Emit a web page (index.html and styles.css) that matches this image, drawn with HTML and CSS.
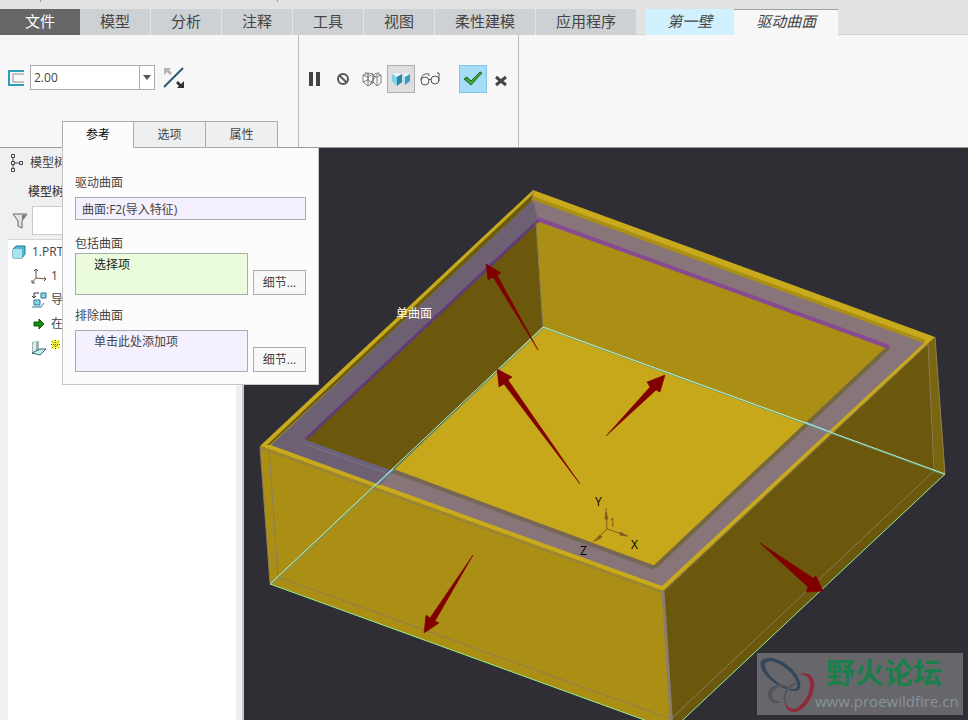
FILE: index.html
```html
<!DOCTYPE html>
<html lang="zh-CN">
<head>
  <meta charset="UTF-8">
  <title>驱动曲面</title>
  <meta name="viewport" content="width=device-width, initial-scale=1">
  <link rel="stylesheet" href="styles.css">
</head>
<body>

  <header>
    <div class="title-strip"></div>
    <nav class="tabs">
      <a href="#" class="tab tab-file">文件</a>
      <a href="#" class="tab">模型</a>
      <a href="#" class="tab">分析</a>
      <a href="#" class="tab">注释</a>
      <a href="#" class="tab">工具</a>
      <a href="#" class="tab">视图</a>
      <a href="#" class="tab">柔性建模</a>
      <a href="#" class="tab">应用程序</a>
      <a href="#" class="tab tab-context">第一壁</a>
      <a href="#" class="tab tab-current">驱动曲面</a>
    </nav>

    <div class="ribbon">
      <div class="group group-settings">
        <div class="thickness">
          <svg class="icon-thickness" width="18" height="18" viewBox="0 0 18 18" fill="none">
            <path d="M16 2H1v14h15" stroke="#2f9fb8" stroke-width="2"/>
            <path d="M16 5H5v8h11" stroke="#8b8f92"/>
          </svg>
          <div class="combo">
            <select aria-label="厚度">
              <option>2.00</option>
            </select>
            <span class="combo-arrow"><svg width="8" height="5" viewBox="0 0 8 5"><path d="M0 0h8L4 5z" fill="#555"/></svg></span>
          </div>
          <button class="flip" aria-label="反向">
            <svg width="22" height="22" viewBox="0 0 22 22">
              <path d="M1 20L20 1" stroke="#2b5873" stroke-width="2"/>
              <path d="M1 1h7L6 3l3 3-2 2-3-3-3 3z" fill="#b4b4b4"/>
              <path d="M21 21h-7l2-2-3-3 2-2 3 3 3-3z" fill="#333"/>
            </svg>
          </button>
        </div>

        <div class="subtabs">
          <button class="subtab active">参考</button>
          <button class="subtab">选项</button>
          <button class="subtab">属性</button>

          <div class="panel">
            <div class="field">
              <label for="driving">驱动曲面</label>
              <input id="driving" type="text" value="曲面:F2(导入特征)" readonly>
            </div>
            <div class="field field-include">
              <label for="include">包括曲面</label>
              <div class="collector">
                <textarea id="include" class="collecting" readonly>选择项</textarea>
                <button>细节...</button>
              </div>
            </div>
            <div class="field">
              <label for="exclude">排除曲面</label>
              <div class="collector">
                <textarea id="exclude" readonly>单击此处添加项</textarea>
                <button>细节...</button>
              </div>
            </div>
          </div>
        </div>
      </div>

      <div class="group group-actions">
        <button aria-label="暂停">
          <svg width="14" height="14" viewBox="0 0 14 14"><path d="M2 0h4v14H2zM9 0h4v14H9z" fill="#444"/></svg>
        </button>
        <button aria-label="无预览">
          <svg width="14" height="14" viewBox="0 0 14 14" fill="none" stroke="#555" stroke-width="2"><circle cx="7" cy="7" r="5"/><path d="M3 3l8 8"/></svg>
        </button>
        <button aria-label="分离预览">
          <svg width="20" height="18" viewBox="0 0 20 18" fill="none" stroke="#666" stroke-width=".8">
            <path d="M1 5l5 2v9M6 7l5-3M1 5l5-2 5 1v9l-5 3-5-4z"/>
            <path d="M1 12l5-2 5 3M6 3v7"/>
            <path d="M11 6l4 1v9l-4-4zM15 7l4-2v8l-4 3M8 14L17 2M11 6l3-3 5 2M3 2l4 3"/>
          </svg>
        </button>
        <button class="pressed" aria-label="连接预览">
          <svg width="20" height="16" viewBox="0 0 20 16">
            <path d="M1 3l5-1 4 1-4 3z" fill="#e8f8fc"/><path d="M1 3l5 3v9l-5-5z" fill="#7fd0ea"/><path d="M6 6l5-3v8l-5 4z" fill="#2787a8"/>
            <path d="M11 3l4-1 4 1-4 3z" fill="#e8f8fc"/><path d="M12 3l2 3v8l-2-3z" fill="#a9e0f2"/><path d="M14 6l5-3v7l-5 4z" fill="#3b9cbe"/>
          </svg>
        </button>
        <button aria-label="校验">
          <svg width="20" height="14" viewBox="0 0 20 14" fill="none" stroke="#555">
            <circle cx="5" cy="9" r="4"/><circle cx="15" cy="8" r="4"/><path d="M9 8q1-2 2 0M1 8C1 4 4 1 9 2v2M19 9V1h-2"/>
          </svg>
        </button>
        <button class="accept" aria-label="确定">
          <svg width="20" height="16" viewBox="0 0 20 16"><path d="M1 8l3-2 4 4L17 1l2 1L8 14z" fill="#3fa535" stroke="#1f6a26"/></svg>
        </button>
        <button aria-label="取消">
          <svg class="icon-cancel" width="14" height="12" viewBox="0 0 14 12"><path d="M1 2l10 8M11 2L1 10" stroke="#444" stroke-width="3"/></svg>
        </button>
      </div>
    </div>
  </header>

  <main>
    <aside>
      <div class="tree-title">
        <svg width="14" height="20" viewBox="0 0 14 20" fill="none" stroke="#444">
          <path d="M1.500 1.500h3v3h-3zM1.500 8.500h3v3h-3zM1.500 15.500h3v3h-3zM9.500 8.500h3v3h-3zM3 5v3M3 12v3M5 10h4"/>
        </svg>
        <span>模型树</span>
      </div>
      <h2>模型树</h2>
      <div class="filter">
        <svg width="16" height="16" viewBox="0 0 16 16"><path d="M1 1h14L10 8v7l-4-2V8z" fill="#e4e4e4" stroke="#666"/><path d="M10 2h4l-4 5z" fill="#777"/></svg>
        <input type="text" aria-label="过滤">
      </div>
      <ul class="tree">
        <li class="root">
          <svg width="14" height="14" viewBox="0 0 14 14" stroke="#28788f"><path d="M1 4l3-3h9v8l-3 4H1z" fill="#55b8d2"/><path d="M1 4h9v9H1z" fill="#a5e4f0" stroke="none"/></svg>
          <span>1.PRT</span>
        </li>
        <li>
          <svg width="16" height="16" viewBox="0 0 16 16" fill="none" stroke="#6b5340"><path d="M5 1v9l10 1M5 10l-4 5M3 3l2-2 2 2M13 9l2 2-2 2M1 12v3h3"/></svg>
          <span>1</span>
        </li>
        <li>
          <svg width="16" height="16" viewBox="0 0 16 16" stroke="#28788f"><path d="M10 1h5v5h-5zM3 8h6v5H3z" fill="#8ad6e8"/><path d="M1 15h9l3-4" fill="none"/><path d="M8 1H3v4M1 4l2 2 2-2" fill="none" stroke="#333"/></svg>
          <span>导</span>
        </li>
        <li>
          <svg width="16" height="16" viewBox="0 0 16 16"><path d="M3 6h5V3l5 5-5 5v-3H3z" fill="#158a15" stroke="#0b5c0b"/></svg>
          <span>在</span>
        </li>
        <li>
          <svg width="16" height="16" viewBox="0 0 16 16"><path d="M1 2l7-1v9l-7 4z" fill="#9fb3b3"/><path d="M2 3l3-1v9l-3 2z" fill="#e3eded"/><path d="M1 13l8-4h6l-6 6z" fill="#c8efef" stroke="#28686f"/></svg>
          <svg class="icon-new" width="9" height="9" viewBox="0 0 9 9"><path d="M0 0h9v9H0z" fill="#ffff55"/><path d="M1 1l7 7M8 1L1 8M4.500 0v9M0 4.500h9" stroke="#665f00" stroke-dasharray="1 1"/></svg>
        </li>
      </ul>
    </aside>

    <section class="viewport">
      <svg class="scene" viewBox="244 148 724 572" preserveAspectRatio="xMinYMin slice">
        <!-- outer walls and rim -->
        <path d="M260 446L663 591l9 139-402-146z" fill="#ab8f15"/>
        <path d="M935 337L663 591l9 139 273-256z" fill="#6b580c"/>
        <path d="M935 337l-7 6 7 130 10 1z" fill="#7b6610"/>
        <path d="M533 190l402 147-272 254L260 446z" fill="#c9aa1c"/>
        <path d="M533 194l-2 9-261 242-3 0z" fill="#6b5d0c"/>
        <path d="M533 196l393 144-4 5-389-142z" fill="#ab8f15"/>

        <!-- selected ring -->
        <path d="M533 200l391 143-262 243L271 445z" fill="#87757a"/>
        <path d="M533 200l5 20-233 220 88 31-13 14-109-40z" fill="#6d6073"/>

        <!-- inside of the box -->
        <path d="M540 220L305 440l88 31 150-144z" fill="#6b580c"/>
        <path d="M536 221l353 126-84 76-262-96z" fill="#ab8f15"/>
        <path d="M543 327l263 96-151 144-262-96z" fill="#c7a81a"/>
        <path d="M889 347L655 567" stroke="#75683f" stroke-width="4"/>
        <path d="M393 471l262 97" stroke="#776755" stroke-width="4"/>
        <path d="M393 473l-88-32" stroke="#6a6284" stroke-width="2"/>
        <path d="M391 475l-86-31" stroke="#7e7286"/>
        <path d="M540 219L306 439" stroke="#603c76" stroke-width="3"/>
        <path d="M538 219l351 128" stroke="#884b92" stroke-width="4"/>

        <!-- hidden and thin edges -->
        <g fill="none" stroke="#8b7c5c">
          <path d="M269 449l9 128 393 142"/>
          <path d="M672 718l262-247"/>
          <path d="M928 343l6 127"/>
          <path d="M935 337l10 137"/>
          <path d="M260 447l10 136"/>
          <path d="M260 448l403 145"/>
          <path d="M536 222l7 105"/>
          <path d="M533 190v14"/>
          <path d="M664 591L928 344"/>
          <path d="M663 591l9 139" stroke="#8b7b70" stroke-width="3"/>
        </g>
        <g fill="none">
          <path d="M271 585L544 328l401 147" stroke="#5f9a80"/>
          <path d="M270 584L543 327l402 147" stroke="#b4f2d8"/>
          <path d="M393 469l-18 17" stroke="#8fd0e4"/>
          <path d="M805 422l26 10" stroke="#8fd0e4"/>
          <path d="M270 584l402 146 273-256" stroke="#90ee90"/>
        </g>

        <!-- direction arrows -->
        <g fill="#800000" stroke="#800000" stroke-width=".6">
          <path d="M486 264l2 16 5-3 45 73-41-75 4-2z"/>
          <path d="M497 369l2 18 5-3 76 100-72-104 4-3z"/>
          <path d="M665 375l-18 7 3 5-44 49 50-46 4 2z"/>
          <path d="M823 591l-17 1 2-5-48-44 53 35 3-2z"/>
          <path d="M424 633l2-18 4 3 43-63-38 66 4 2z"/>
        </g>

        <!-- csys 1 -->
        <g fill="#8a5a20" stroke="#8a5a20">
          <path d="M607 529l-1-21M607 529l21 7M607 529l-14 13" fill="none"/>
          <path d="M606 512l-1 7h3zM627 536l-7-4v3zM595 541l5-6 2 2z"/>
        </g>
        <text class="csys-name" x="609" y="527">1</text>
        <text class="axis" x="595" y="506">Y</text>
        <text class="axis" x="631" y="549">X</text>
        <text class="axis" x="580" y="555">Z</text>
        <text class="tip" x="396" y="318">单曲面</text>
      </svg>

      <div class="watermark">
        <svg width="58" height="62" viewBox="0 0 58 62">
          <path fill-rule="evenodd" d="M4 8C11 0 30 8 39 21c6 9 6 17-1 17C26 38 0 22 4 8zm4 3c-1 9 16 24 28 25 7 0 5-8-2-16C26 11 11 4 8 11z" fill="#33475c"/>
          <path d="M27 33c-8-3-16 2-16 9 0 7 8 10 15 7-7 0-11-3-11-7 0-5 5-8 12-9z" fill="#50555d"/>
          <path d="M41 22c10-5 18 2 16 13-2 12-11 24-20 24-6 0-9-5-9-10 2 6 8 9 13 5 7-5 12-14 12-22 0-8-5-12-12-10z" fill="#8f2a3a"/>
          <path d="M29 50c-4-7 0-15 10-20M18 34q6-4 14 1" fill="none" stroke="#50555d" stroke-width="2"/>
        </svg>
        <div class="watermark-text">
          <strong>野火论坛</strong>
          <span>www.proewildfire.cn</span>
        </div>
      </div>
    </section>
  </main>

</body>
</html>
```

FILE: styles.css
```css
:root {
  --ribbon: #f7f7f7;
  --line: #a9abad;
  --text: #444;
  --lilac: #f4f0fe;
}

* { box-sizing: border-box; }

body {
  margin: 0;
  height: 100vh;
  display: flex;
  flex-direction: column;
  overflow: hidden;
  font-family: "Open Sans", "Noto Sans CJK SC", sans-serif;
  font-size: 12px;
  line-height: 18px;
  color: var(--text);
  background-color: #2f2e35;
}

button, input, select, textarea {
  font: inherit;
  color: inherit;
  margin: 0;
  border-radius: 0;
}

svg {
  display: block;
  flex: none;
}

/* top tabs */
.title-strip {
  height: 9px;
  background:
    linear-gradient(#999, #999) 40px 0 / 1px 2px no-repeat,
    linear-gradient(#999, #999) 277px 0 / 1px 2px no-repeat,
    #e2e2e2;
}

.tabs {
  display: flex;
  height: 26px;
  background-color: #e2e2e2;
  border-bottom: 1px solid #d0d2d3;
}

.tab {
  height: 26px;
  padding: 0 20px;
  border-right: 1px solid #e2e4e5;
  background-color: #cdd1d3;
  color: #444;
  font-size: 15px;
  line-height: 24px;
  text-decoration: none;
  white-space: nowrap;
}

.tab-file {
  padding: 0 25px;
  border-right: 0;
  background-color: #666;
  color: #fff;
}

.tab-context {
  margin-left: 8px;
  padding: 0 22px;
  border-right: 0;
  background-color: #d2f1fe;
  font-style: italic;
}

.tab-current {
  padding: 0 22px;
  border-top: 1px solid #a0a0a0;
  border-right: 0;
  background-color: var(--ribbon);
  font-style: italic;
  line-height: 22px;
}

/* ribbon */
.ribbon {
  display: flex;
  height: 113px;
  background-color: var(--ribbon);
  border-bottom: 1px solid #97999c;
}

.group {
  padding-top: 30px;
  border-right: 1px solid #b9bbbd;
}

.group-settings {
  width: 299px;
  display: flex;
  flex-direction: column;
  justify-content: space-between;
}

.thickness {
  display: flex;
  align-items: center;
  padding-left: 8px;
}

.combo {
  position: relative;
  width: 125px;
  height: 25px;
  margin: 0 8px 0 4px;
}

.combo select {
  appearance: none;
  width: 100%;
  height: 100%;
  padding: 0 3px;
  border: 1px solid var(--line);
  background-color: #fff;
}

.combo-arrow {
  position: absolute;
  top: 0;
  right: 0;
  width: 16px;
  height: 100%;
  display: flex;
  align-items: center;
  justify-content: center;
  border: 1px solid var(--line);
  pointer-events: none;
}

.flip {
  padding: 0;
  border: 0;
  background: none;
}

.subtabs {
  position: relative;
  display: flex;
  margin-left: 62px;
  margin-bottom: -1px;
}

.subtab {
  width: 72px;
  height: 27px;
  padding: 0;
  border: 1px solid var(--line);
  border-left-width: 0;
  background-color: #eeeff0;
}

.subtab.active {
  border-left-width: 1px;
  border-bottom-color: #fcfcfc;
  background-color: #fcfcfc;
  color: #000;
}

.group-actions {
  display: flex;
  align-items: flex-start;
  gap: 1px;
  width: 220px;
  padding-left: 1px;
}

.group-actions button {
  width: 28px;
  height: 28px;
  padding: 0;
  display: flex;
  align-items: center;
  justify-content: center;
  border: 1px solid transparent;
  background: none;
}

.group-actions .pressed {
  border-color: #a9b0b4;
  background-color: #dedede;
}

.group-actions .accept {
  margin-left: 14px;
  border-color: #83c5e0;
  background-color: #a5dcf8;
}

.icon-cancel { margin-top: 3px; }

/* references panel */
.panel {
  position: absolute;
  z-index: 2;
  top: 100%;
  left: 0;
  width: 257px;
  padding: 26px 12px 12px;
  border: 1px solid #c4c6c8;
  border-top: 0;
  background-color: #fcfcfc;
}

.field {
  display: flex;
  flex-direction: column;
  gap: 5px;
  margin-bottom: 12px;
}

.field:last-child { margin-bottom: 0; }

.field-include {
  gap: 0;
  margin-top: 15px;
}

.panel input {
  height: 23px;
  padding: 0 6px;
  border: 1px solid var(--line);
  background-color: var(--lilac);
}

.collector {
  display: flex;
  align-items: flex-end;
  gap: 5px;
}

.collector textarea {
  flex: 1;
  min-width: 0;
  height: 42px;
  padding: 2px 18px;
  border: 1px solid var(--line);
  background-color: var(--lilac);
  resize: none;
  overflow: hidden;
}

.collector .collecting {
  background-color: #eafcdc;
  color: #222;
}

.collector button {
  width: 53px;
  height: 25px;
  padding: 0;
  border: 1px solid var(--line);
  background-color: #f8f8f8;
}

/* model tree */
main {
  flex: 1;
  display: flex;
  min-height: 0;
}

aside {
  width: 244px;
  flex: none;
  display: flex;
  flex-direction: column;
  padding: 5px 6px 0 8px;
  border-right: 2px solid #c3c6ca;
  background-color: #eff0f1;
}

.tree-title {
  display: flex;
  align-items: center;
  gap: 6px;
  height: 20px;
  padding-left: 2px;
}

aside h2 {
  margin: 10px 0 5px 20px;
  font-size: 12px;
  line-height: 18px;
  font-weight: 500;
}

.filter {
  display: flex;
  align-items: center;
  gap: 4px;
  padding-left: 4px;
}

.filter input {
  flex: 1;
  min-width: 0;
  height: 29px;
  border: 1px solid #c9cbcd;
  background-color: #fff;
}

.tree {
  flex: 1;
  margin: 4px 0 0;
  padding: 0;
  list-style: none;
  border-top: 1px solid #d2d4d6;
  background-color: #fff;
}

.tree li {
  display: flex;
  align-items: center;
  gap: 4px;
  height: 24px;
  padding-left: 23px;
}

.tree .root {
  gap: 6px;
  padding-left: 4px;
}

.icon-new { margin-bottom: 8px; }

/* graphics area */
.viewport {
  position: relative;
  flex: 1;
  min-width: 0;
  overflow: hidden;
}

.scene {
  width: 100%;
  height: 100%;
}

.scene text { font-size: 12px; }
.scene .axis { fill: #000; }
.scene .csys-name { fill: #8a5a20; }
.scene .tip { fill: #fff; }

.watermark {
  position: absolute;
  right: 5px;
  bottom: 5px;
  width: 206px;
  height: 62px;
  display: flex;
  align-items: center;
  background-color: rgba(112, 112, 115, 0.88);
}

.watermark-text {
  display: flex;
  flex-direction: column;
  white-space: nowrap;
}

.watermark strong {
  padding-left: 11px;
  font-size: 29px;
  line-height: 34px;
  color: #1a7f4a;
}

.watermark span {
  font-size: 15px;
  line-height: 22px;
  color: #87939a;
}
```
